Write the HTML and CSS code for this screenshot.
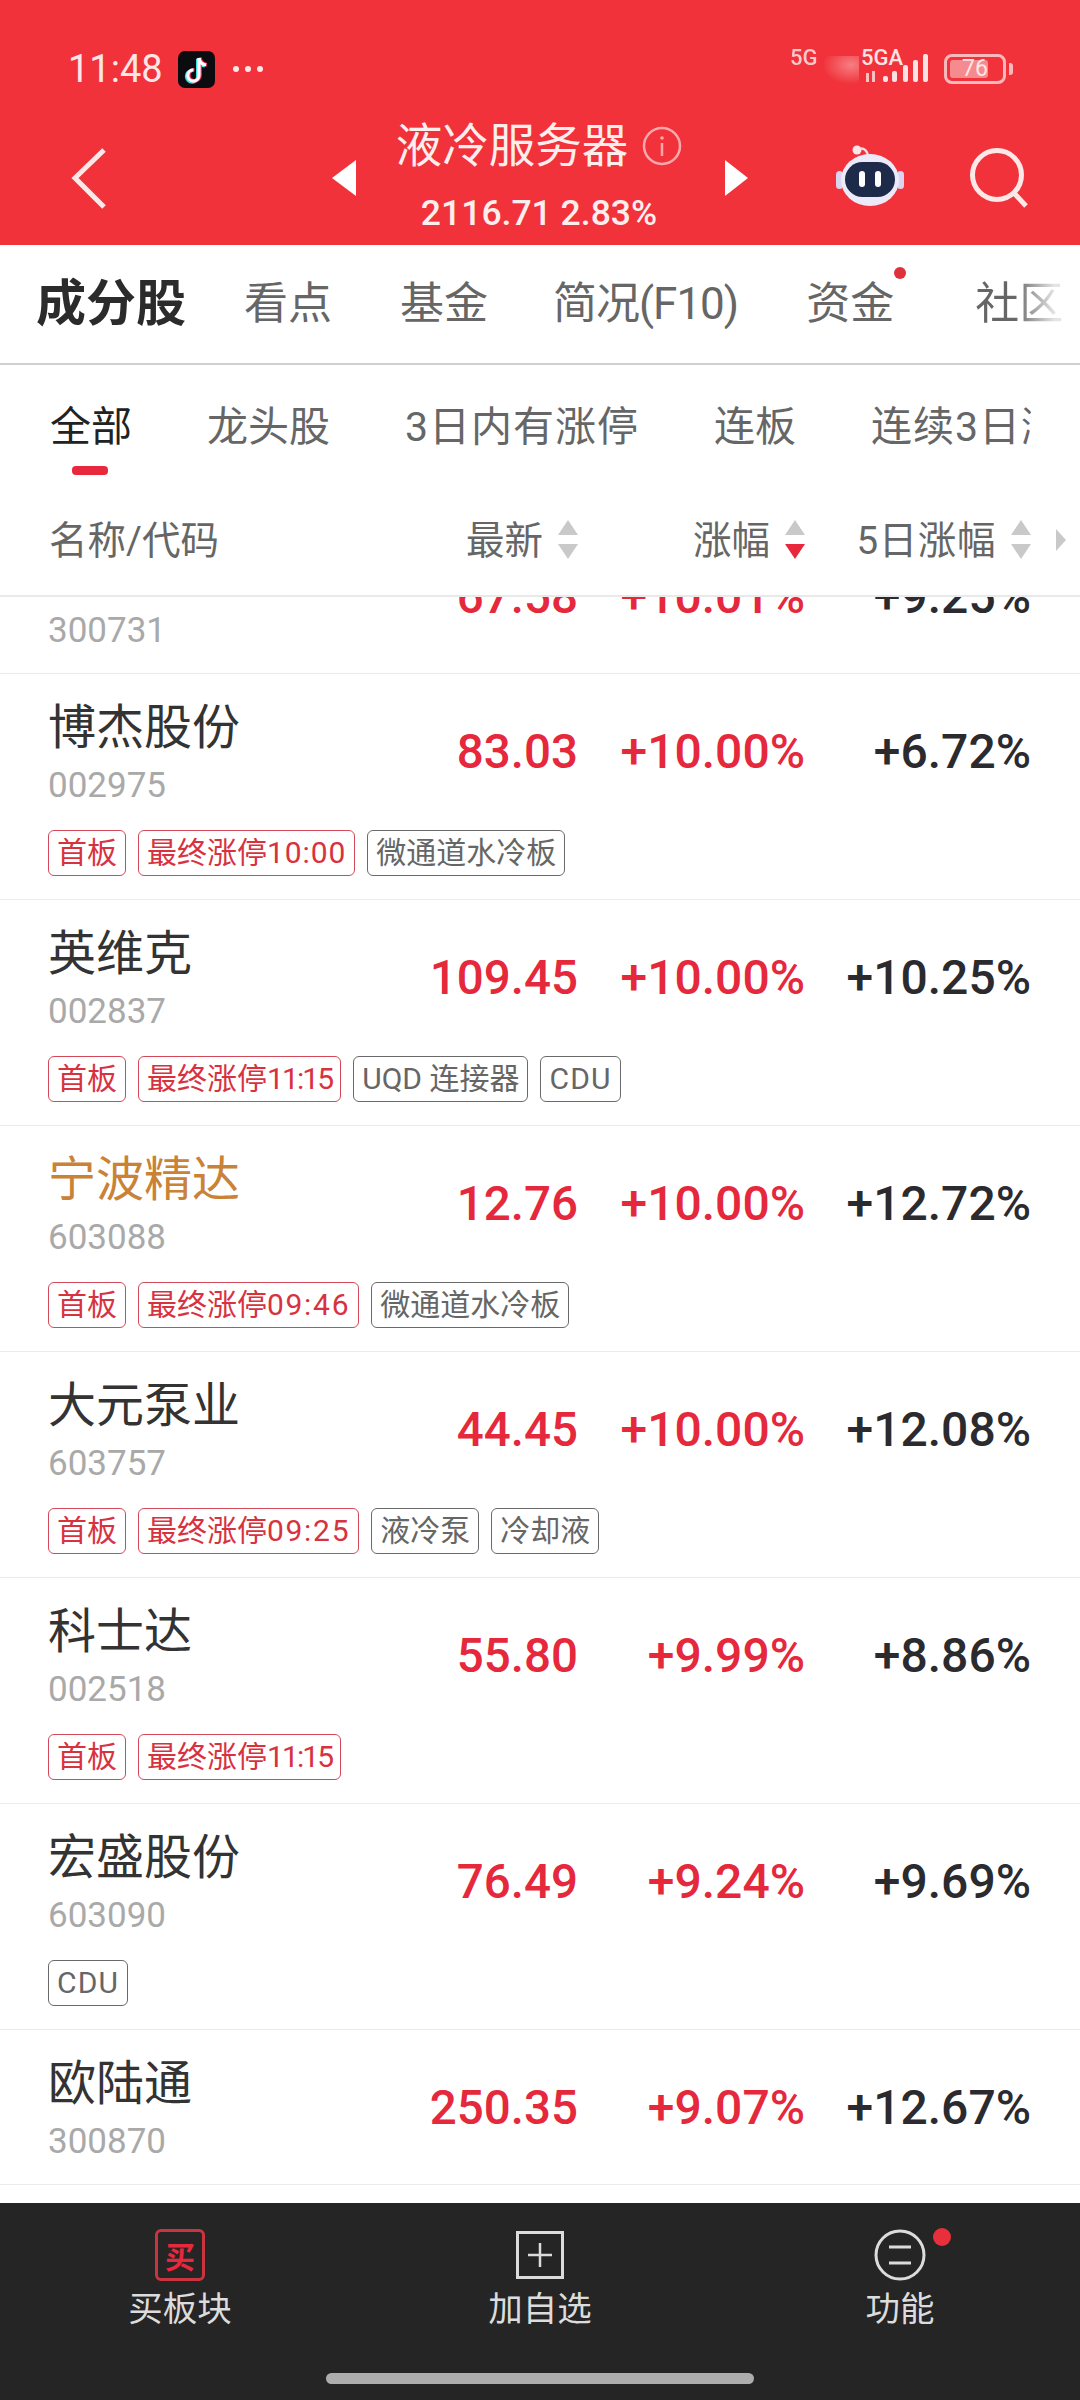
FILE: index.html
```html
<!DOCTYPE html>
<html lang="zh-CN">
<head>
  <meta charset="UTF-8" />
  <title>液冷服务器</title>
  <link rel="stylesheet" href="styles.css">
</head>
<body>
<div class="page">

  <!-- red header -->
  <header class="header">
    <div class="status">
      <div class="status-left">
        <span class="clock">11:48</span>
        <svg class="tiktok" width="37" height="37" viewBox="0 0 37 37">
          <rect width="37" height="37" rx="7" fill="#0b0b10"/>
          <path d="M21 7v17.5a5.6 5.6 0 1 1-5.6-5.6" fill="none" stroke="#3ce0e6" stroke-width="3.6" transform="translate(-1.2 .8)"/>
          <path d="M21 7c.5 4 3 6.5 7 7" fill="none" stroke="#3ce0e6" stroke-width="3.6" transform="translate(-1.2 .8)"/>
          <path d="M21 7v17.5a5.6 5.6 0 1 1-5.6-5.6" fill="none" stroke="#f5315a" stroke-width="3.6" transform="translate(1 -.2)"/>
          <path d="M21 7c.5 4 3 6.5 7 7" fill="none" stroke="#f5315a" stroke-width="3.6" transform="translate(1 -.2)"/>
          <path d="M21 7v17.5a5.6 5.6 0 1 1-5.6-5.6" fill="none" stroke="#fff" stroke-width="3.2"/>
          <path d="M21 7c.5 4 3 6.5 7 7" fill="none" stroke="#fff" stroke-width="3.2"/>
        </svg>
        <span class="status-dots"><i></i><i></i><i></i></span>
      </div>
      <div class="status-right">
        <span class="net-label net-first">5G</span>
        <span class="net-smear"></span>
        <div class="net-second">
          <span class="net-label">5GA</span>
          <svg class="signal" width="66" height="30" viewBox="0 0 66 30">
            <g fill="#fbe3e4">
              <rect x="3" y="19" width="3" height="9" opacity=".8"/>
              <rect x="9" y="17" width="3" height="11" opacity=".8"/>
              <rect x="20" y="22" width="5" height="6" rx="2"/>
              <rect x="29" y="17" width="5" height="11" rx="2"/>
              <rect x="40" y="11" width="5" height="17" rx="2"/>
              <rect x="50" y="6" width="5" height="22" rx="2"/>
              <rect x="60" y="0" width="5" height="28" rx="2"/>
            </g>
          </svg>
        </div>
        <div class="battery">
          <span class="battery-body"><span class="battery-fill"></span><span class="battery-num">76</span></span>
          <span class="battery-tip"></span>
        </div>
      </div>
    </div>

    <nav class="nav">
      <div class="nav-left">
        <svg width="40" height="64" viewBox="0 0 40 64">
          <path d="M34 4 5 32l29 29" fill="none" stroke="#fde8e8" stroke-width="5"/>
        </svg>
      </div>
      <div class="nav-center">
        <span class="tri tri-left"></span>
        <div class="nav-title">
          <div class="title-line">
            <span class="title">液冷服务器</span>
            <svg class="info" width="40" height="40" viewBox="0 0 40 40">
              <circle cx="20" cy="20" r="18" fill="none" stroke="#f9a9ac" stroke-width="2.5"/>
              <path d="M20 17v13" stroke="#f9a9ac" stroke-width="2.5"/>
              <circle cx="20" cy="12" r="1.8" fill="#f9a9ac"/>
            </svg>
          </div>
          <div class="index-line">2116.71 2.83%</div>
        </div>
        <span class="tri tri-right"></span>
      </div>
      <div class="nav-right">
        <svg class="robot" width="68" height="62" viewBox="0 0 68 62">
          <path d="M22 6c4-3 9-1 10 6" fill="none" stroke="#f4d9de" stroke-width="2.5"/>
          <circle cx="21" cy="6" r="4.5" fill="#f6e6e9"/>
          <rect x="0" y="27" width="7" height="18" rx="3.5" fill="#d9d4f0"/>
          <rect x="61" y="27" width="7" height="18" rx="3.5" fill="#d9d4f0"/>
          <ellipse cx="34" cy="36" rx="29" ry="26" fill="#ece9f8"/>
          <rect x="9" y="18" width="50" height="35" rx="17.5" fill="#1e2a4a"/>
          <rect x="23" y="27" width="6" height="16" rx="3" fill="#fff"/>
          <rect x="39" y="27" width="6" height="16" rx="3" fill="#fff"/>
        </svg>
        <svg class="search" width="60" height="62" viewBox="0 0 60 62">
          <circle cx="27" cy="28" r="24.5" fill="none" stroke="#fde8e8" stroke-width="5"/>
          <path d="M44 46l12 13" stroke="#fde8e8" stroke-width="5"/>
        </svg>
      </div>
    </nav>
  </header>

  <!-- main tabs -->
  <div class="tabs">
    <div class="tab tab-on">成分股<span class="tab-bar"></span></div>
    <div class="tab">看点</div>
    <div class="tab">基金</div>
    <div class="tab tab-f10">简况(F10)</div>
    <div class="tab">资金<span class="tab-dot"></span></div>
    <div class="tab tab-fade">社区</div>
  </div>

  <!-- sub tabs -->
  <div class="subtabs">
    <div class="subtab subtab-on">全部<span class="subtab-bar"></span></div>
    <div class="subtab">龙头股</div>
    <div class="subtab subtab-wide">3日内有涨停</div>
    <div class="subtab">连板</div>
    <div class="subtab subtab-wide">连续3日涨停</div>
  </div>

  <!-- column titles -->
  <div class="columns">
    <div class="col-name">名称/代码</div>
    <div class="col col-price">最新<span class="sort"><i class="up"></i><i class="down"></i></span></div>
    <div class="col col-pct">涨幅<span class="sort"><i class="up"></i><i class="down on"></i></span></div>
    <div class="col col-day">5日涨幅<span class="sort"><i class="up"></i><i class="down"></i></span></div>
    <span class="col-more"></span>
  </div>

  <!-- list -->
  <div class="list">
    <div class="row row-cut">
      <div class="row-main">
        <div class="stock"><div class="name">科森科技</div><div class="code">300731</div></div>
        <div class="price">67.58</div><div class="pct">+10.01%</div><div class="day">+9.25%</div>
      </div>
    </div>

    <div class="row">
      <div class="row-main">
        <div class="stock"><div class="name">博杰股份</div><div class="code">002975</div></div>
        <div class="price">83.03</div><div class="pct">+10.00%</div><div class="day">+6.72%</div>
      </div>
      <div class="tags"><span class="tag red">首板</span><span class="tag red">最终涨停<span class="hm-ten">10:00</span></span><span class="tag">微通道水冷板</span></div>
    </div>

    <div class="row">
      <div class="row-main">
        <div class="stock"><div class="name">英维克</div><div class="code">002837</div></div>
        <div class="price">109.45</div><div class="pct">+10.00%</div><div class="day">+10.25%</div>
      </div>
      <div class="tags"><span class="tag red">首板</span><span class="tag red">最终涨停<span class="hm-ones">11:15</span></span><span class="tag">UQD 连接器</span><span class="tag tag-cdu">CDU</span></div>
    </div>

    <div class="row">
      <div class="row-main">
        <div class="stock"><div class="name name-held">宁波精达</div><div class="code">603088</div></div>
        <div class="price">12.76</div><div class="pct">+10.00%</div><div class="day">+12.72%</div>
      </div>
      <div class="tags"><span class="tag red">首板</span><span class="tag red">最终涨停<span class="hm">09:46</span></span><span class="tag">微通道水冷板</span></div>
    </div>

    <div class="row">
      <div class="row-main">
        <div class="stock"><div class="name">大元泵业</div><div class="code">603757</div></div>
        <div class="price">44.45</div><div class="pct">+10.00%</div><div class="day">+12.08%</div>
      </div>
      <div class="tags"><span class="tag red">首板</span><span class="tag red">最终涨停<span class="hm">09:25</span></span><span class="tag">液冷泵</span><span class="tag">冷却液</span></div>
    </div>

    <div class="row">
      <div class="row-main">
        <div class="stock"><div class="name">科士达</div><div class="code">002518</div></div>
        <div class="price">55.80</div><div class="pct">+9.99%</div><div class="day">+8.86%</div>
      </div>
      <div class="tags"><span class="tag red">首板</span><span class="tag red">最终涨停<span class="hm-ones">11:15</span></span></div>
    </div>

    <div class="row">
      <div class="row-main">
        <div class="stock"><div class="name">宏盛股份</div><div class="code">603090</div></div>
        <div class="price">76.49</div><div class="pct">+9.24%</div><div class="day">+9.69%</div>
      </div>
      <div class="tags"><span class="tag tag-cdu">CDU</span></div>
    </div>

    <div class="row">
      <div class="row-main">
        <div class="stock"><div class="name">欧陆通</div><div class="code">300870</div></div>
        <div class="price">250.35</div><div class="pct">+9.07%</div><div class="day">+12.67%</div>
      </div>
    </div>
  </div>

  <!-- bottom bar -->
  <footer class="bottom">
    <div class="actions">
      <div class="action">
        <span class="buy-icon">买</span>
        <span class="action-label">买板块</span>
      </div>
      <div class="action">
        <svg class="action-icon" width="52" height="52" viewBox="0 0 52 52">
          <rect x="3.5" y="3.5" width="45" height="45" fill="none" stroke="#dcdcdc" stroke-width="3"/>
          <path d="M26 14v24M14 26h24" stroke="#dcdcdc" stroke-width="2.5"/>
        </svg>
        <span class="action-label">加自选</span>
      </div>
      <div class="action">
        <span class="more-wrap">
          <svg class="action-icon" width="52" height="52" viewBox="0 0 52 52">
            <circle cx="26" cy="26" r="24" fill="none" stroke="#dcdcdc" stroke-width="3"/>
            <path d="M15 18h22M15 34h22" stroke="#dcdcdc" stroke-width="3"/>
          </svg>
          <span class="more-dot"></span>
        </span>
        <span class="action-label">功能</span>
      </div>
    </div>
    <div class="home-bar"></div>
  </footer>

</div>
</body>
</html>
```

FILE: styles.css
```css
* { box-sizing: border-box; margin: 0; padding: 0 }
html, body {
  width: 1080px; height: 2400px;
  overflow: hidden;
  background: #fff;
  font-family: Roboto, 'Noto Sans CJK SC', sans-serif;
}
.page {
  width: 1080px; height: 2400px;
  display: flex; flex-direction: column;
}

/*–––– Header ––––*/
.header {
  height: 245px;
  flex: none;
  background: #f1323a;
  color: #fff;
}
.status {
  height: 110px;
  padding: 44px 67px 0 68px;
  display: flex; justify-content: space-between; align-items: flex-start;
}
.status-left { display: flex; align-items: center; height: 50px }
.clock { font-size: 38px; color: #fde6e6; line-height: 50px; width: 110px }
.tiktok { margin-top: 1px }
.status-dots { display: flex; gap: 6px; margin-left: 18px }
.status-dots i { width: 6px; height: 6px; border-radius: 50%; background: #fde6e6 }

.status-right { display: flex; align-items: flex-start; height: 50px }
.net-label { font-size: 22px; font-weight: 500; line-height: 18px; color: #fbe3e4; display: block }
.net-first { margin-top: 5px; width: 30px; overflow: hidden; height: 18px; opacity: .85 }
.net-smear {
  width: 39px; height: 30px; margin: 12px 4px 0 0;
  background: radial-gradient(ellipse at 80% 30%, rgba(253,220,220,.45), rgba(253,220,220,0) 65%);
}
.net-second { position: relative; width: 64px; height: 40px; margin-top: 5px; margin-right: 17px }
.net-second .net-label { position: relative; z-index: 1; margin-left: -2px }
.signal { position: absolute; left: 0; top: 5px }
.battery { display: flex; align-items: center; margin-top: 10px }
.battery-body {
  position: relative;
  width: 62px; height: 30px;
  border: 3px solid #f9b9bb; border-radius: 8px;
  display: flex; align-items: center; justify-content: center;
  padding: 3px;
}
.battery-fill {
  position: absolute; left: 3px; top: 3px; bottom: 3px; width: 38px;
  background: #f58a8f; border-radius: 3px;
}
.battery-num { position: relative; font-size: 23px; line-height: 24px; color: #fde6e6 }
.battery-tip { width: 4px; height: 12px; background: #f9b9bb; border-radius: 0 3px 3px 0; margin-left: 3px }

.nav {
  height: 135px;
  display: grid; grid-template-columns: 1fr auto 1fr; align-items: center;
}
.nav-left { padding-left: 70px; display: flex }
.nav-center { display: flex; align-items: center }
.nav-right { display: flex; justify-content: flex-end; align-items: center; padding-right: 50px; gap: 66px }
.robot { margin-top: -6px }
.tri { width: 0; height: 0; border-top: 18px solid transparent; border-bottom: 18px solid transparent }
.tri-left { border-right: 24px solid #fff }
.tri-right { border-left: 23px solid #fff }
.nav-title { width: 369px; display: flex; flex-direction: column; align-items: center; margin-top: -4px; padding-right: 3px }
.title-line { display: flex; align-items: center; gap: 14px; height: 60px }
.title { font-size: 46.5px; line-height: 60px; color: #fdeeee }
.index-line { font-size: 35.5px; font-weight: 500; line-height: 46px; margin-top: 14px; color: #fdeeee }

/*–––– Tabs ––––*/
.tabs {
  height: 120px; flex: none;
  position: relative;
  display: flex; align-items: center; gap: 68px;
  padding: 0 0 0 36px;
  border-bottom: 2px solid #d0d0d0;
  overflow: hidden;
}
.tab { position: relative; font-size: 44px; line-height: 60px; color: #666; white-space: nowrap; margin-top: -1px }
.tab-on { font-size: 50px; font-weight: 700; color: #2b2b2b; margin-right: -10px }
.tab-f10 { letter-spacing: -1px; margin-left: -3px }
.tab-bar {
  position: absolute; left: 46px; bottom: -49px;
  width: 58px; height: 12px; border-radius: 6px; background: #f2323c;
}
.tab-dot {
  position: absolute; right: -12px; top: -7px;
  width: 12px; height: 12px; border-radius: 50%; background: #e0303c;
}
.tab-fade {
  margin-left: 13px;
  color: transparent;
  background: linear-gradient(90deg, #666 45%, #e4e4e4 90%);
  -webkit-background-clip: text; background-clip: text;
}

/*–––– Sub tabs ––––*/
.subtabs {
  height: 124px; flex: none;
  width: 1031px;
  display: flex; align-items: flex-start; gap: 75px;
  padding: 32px 0 0 50px;
  overflow: hidden;
}
.subtab { position: relative; font-size: 41px; line-height: 60px; color: #666; white-space: nowrap }
.subtab-on { color: #222 }
.subtab-wide { letter-spacing: 1px }
.subtab-bar {
  position: absolute; left: 22px; top: 69px;
  width: 36px; height: 9px; border-radius: 4px; background: #e8283c;
}

/*–––– Column titles ––––*/
.columns {
  height: 106px; flex: none;
  display: flex; align-items: center;
  padding-left: 49px; padding-bottom: 12px;
  border-bottom: 2px solid #e9e9e9;
  font-size: 38.5px; color: #666;
  margin-top: 2px;
}
.col-name { flex: 1 }
.col { display: flex; align-items: center; justify-content: flex-end; white-space: nowrap }
.col-price { width: 200px }
.col-pct { width: 227px }
.col-day { width: 226px; letter-spacing: .6px }
.sort { display: flex; flex-direction: column; gap: 9px; margin: 5px 0 0 14px; width: 21px; align-items: center }
.sort i { width: 0; height: 0; border-left: 10px solid transparent; border-right: 10px solid transparent }
.sort .up { border-bottom: 15px solid #c9c9c9 }
.sort .down { border-top: 15px solid #c9c9c9 }
.sort .down.on { border-top-color: #e8283c }
.col-more {
  width: 0; height: 0; margin: 5px 14px 0 25px;
  border-top: 11px solid transparent; border-bottom: 11px solid transparent;
  border-left: 10px solid #c9c9c9;
}

/*–––– List ––––*/
.list { flex: 1; overflow: hidden; min-height: 0 }
.row {
  padding: 22px 49px 20px 48px;
  border-bottom: 1px solid #ececec;
}
.row-cut { margin-top: -78px }
.row-main { display: flex; align-items: center; height: 112px }
.stock { flex: 1 }
.name { font-size: 48px; line-height: 64px; color: #333 }
.name-held { color: #c98236 }
.code { font-size: 35px; line-height: 44px; margin-top: 4px; color: #a9a9a9 }
.price, .pct, .day {
  font-size: 48px; font-weight: 500; line-height: 60px;
  text-align: right;
}
.price { color: #e5283c; font-size: 47.5px }
.pct { width: 227px; color: #e5283c }
.day { width: 226px; color: #2b2b2f }

.tags { display: flex; gap: 12px; margin-top: 22px; margin-bottom: 3px }
.tag {
  height: 46px; padding: 0 8px;
  border: 1.5px solid #6a6a6a; border-radius: 6px;
  font-size: 30px; line-height: 43px; color: #666;
  white-space: nowrap;
}
.tag.red { border-color: #d4495a; color: #d8323f }
.tag-cdu { letter-spacing: 1.2px }
.hm { letter-spacing: 1.7px }
.hm-ten { letter-spacing: .9px }
.hm-ones { letter-spacing: -1.9px }

/*–––– Bottom bar ––––*/
.bottom {
  height: 197px; flex: none;
  background: #252525;
  display: flex; flex-direction: column;
}
.actions { display: flex; padding-top: 26px }
.action { flex: 1; display: flex; flex-direction: column; align-items: center; gap: 4px }
.action-icon { display: block }
.action-label { font-size: 34.5px; line-height: 48px; color: #dcdcdc }
.buy-icon {
  width: 50px; height: 52px;
  border: 3px solid #c9343f; border-radius: 6px;
  display: flex; align-items: center; justify-content: center;
  font-size: 30px; font-weight: 700; color: #e8283c;
}
.more-wrap { position: relative; display: block }
.more-dot {
  position: absolute; left: 59px; top: -1px;
  width: 18px; height: 18px; border-radius: 50%; background: #e8303c;
}
.home-bar {
  width: 428px; height: 11px; border-radius: 6px;
  background: #adadad;
  margin: 40px auto 0;
}
```
